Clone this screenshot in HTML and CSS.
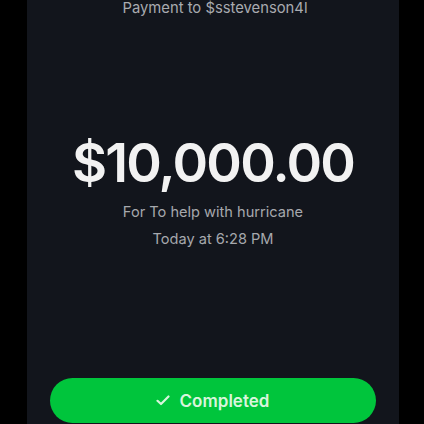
FILE: index.html
```html
<!DOCTYPE html>
<html>
<head>
<meta charset="utf-8">
<link rel="stylesheet" href="styles.css">
</head>
<body>
<div class="screen">
  <div class="payee">Payment to $sstevenson4l</div>
  <div class="amount">$10,000.00</div>
  <div class="note">For To help with hurricane</div>
  <div class="time">Today at 6:28 PM</div>
  <div class="btn">
    <svg class="check" width="14" height="11" viewBox="0 0 14 11"><path d="M1.5 5.8 L5 9 L12.5 1.5" fill="none" stroke="#d8f5dc" stroke-width="2.2" stroke-linecap="round" stroke-linejoin="round"/></svg>
    <span>Completed</span>
  </div>
</div>
</body>
</html>
```

FILE: styles.css
```css
html, body {
  margin: 0;
  padding: 0;
  background: #000;
  width: 424px;
  height: 424px;
  overflow: hidden;
}
.screen {
  margin-left: 27px;
  width: 372px;
  height: 424px;
  background: #12151c;
  display: flex;
  flex-direction: column;
  align-items: center;
  font-family: "Inter", "Roboto", sans-serif;
}
.payee {
  margin-top: -2px;
  font-size: 14.8px;
  line-height: 20px;
  color: #a9abb0;
  margin-left: 4px;
}
.amount {
  margin-top: 115px;
  font-size: 54px;
  line-height: 60px;
  font-weight: 600;
  color: #f2f2f2;
  letter-spacing: -1.8px;
}
.note {
  margin-top: 10px;
  font-size: 14.6px;
  line-height: 18px;
  color: #a6a8ad;
}
.time {
  margin-top: 9px;
  font-size: 14.6px;
  line-height: 18px;
  color: #a6a8ad;
}
.btn {
  margin-top: auto;
  margin-bottom: 1px;
  width: 326px;
  height: 45px;
  border-radius: 23px;
  background: #00c53c;
  display: flex;
  align-items: center;
  justify-content: center;
  gap: 10px;
  color: #d8f5dc;
  font-size: 17px;
  font-weight: 600;
  margin-left: -1px;
}
.check { display: block; }
```
